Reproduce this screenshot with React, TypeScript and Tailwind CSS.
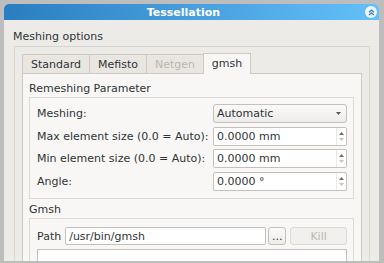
import React from "react";

function SpinBox({ value }: { value: string }) {
  return (
    <div className="flex h-[19px] w-[134px] items-stretch rounded-[2px] border border-[#c4c0bb] bg-white">
      <div className="flex flex-1 items-center pl-[3px]">{value}</div>
      <div className="flex w-[10px] flex-col items-center justify-center gap-[3px] border-l border-[#ebe9e6]">
        <svg width="5" height="3" viewBox="0 0 5 3">
          <path d="M0 3 L2.5 0 L5 3Z" fill="#6b6b6b" />
        </svg>
        <svg width="5" height="3" viewBox="0 0 5 3">
          <path d="M0 0 L2.5 3 L5 0Z" fill="#c4c4c4" />
        </svg>
      </div>
    </div>
  );
}

function Row({ label, children, className = "" }: { label: string; children: React.ReactNode; className?: string }) {
  return (
    <div className={`flex h-[19px] items-center justify-between ${className}`}>
      <span>{label}</span>
      {children}
    </div>
  );
}

export default function App() {
  return (
    <div className="h-[263px] w-[384px] overflow-hidden bg-[#bdbdbd] pl-[4px] pt-[4px] font-['DejaVu_Sans',sans-serif] text-[11px] leading-[13px] text-[#2e3436]">
      <div className="flex h-[257px] w-[375px] flex-col overflow-hidden rounded-t-[5px] bg-[#edebe8]">
        {/* Title bar */}
        <div className="relative flex h-[16px] shrink-0 items-center justify-center bg-gradient-to-r from-[#2a7ec0] to-[#63c0f9] pr-[16px]">
          <span className="font-bold text-white">Tessellation</span>
          <div className="absolute right-[2px] top-[2px] flex h-[12px] w-[12px] items-center justify-center rounded-full bg-[#eef5fb]">
            <svg width="7" height="7" viewBox="0 0 7 7" fill="none">
              <path d="M1 3.2 L3.5 1 L6 3.2" stroke="#3a7fb8" strokeWidth="1.3" />
              <path d="M1 6 L3.5 3.8 L6 6" stroke="#3a7fb8" strokeWidth="1.3" />
            </svg>
          </div>
        </div>

        {/* Meshing options */}
        <div className="pl-[9px] pt-[10px]">Meshing options</div>
        <div className="ml-[10px] mr-[9px] mt-[3px] flex flex-1 flex-col border border-b-0 border-[#d8d4cf] px-[7px] pt-[6px]">
          {/* Tabs */}
          <div className="flex items-end">
            <div className="flex h-[19px] w-[67px] items-center justify-center border-l border-t border-[#cdc9c4] bg-[#e9e6e2]">
              Standard
            </div>
            <div className="flex h-[19px] w-[57px] items-center justify-center border-l border-t border-[#cdc9c4] bg-[#e9e6e2]">
              Mefisto
            </div>
            <div className="flex h-[19px] w-[57px] items-center justify-center border-l border-t border-[#cdc9c4] bg-[#e9e6e2] text-[#bab7b3]">
              Netgen
            </div>
            <div className="relative z-10 -mb-px flex h-[21px] w-[48px] items-center justify-center border-x border-t border-[#cdc9c4] bg-[#f9f7f5] pb-[1px]">
              gmsh
            </div>
          </div>

          {/* Pane */}
          <div className="flex flex-1 flex-col border border-b-0 border-[#cdc9c4] bg-[#f9f7f5] pl-[6px] pr-[7px] pt-[8px]">
            <div>Remeshing Parameter</div>
            <div className="mt-[2px] flex flex-col border border-[#dedad5] pb-[7px] pl-[7px] pr-[6px] pt-[6px]">
              <Row label="Meshing:">
                <div className="flex h-[19px] w-[134px] items-center justify-between rounded-[3px] border border-[#c4c0bb] bg-gradient-to-b from-[#fafaf9] to-[#eeecea] pl-[3px] pr-[5px]">
                  <span>Automatic</span>
                  <svg width="5" height="3" viewBox="0 0 5 3">
                    <path d="M0 0 L2.5 3 L5 0Z" fill="#555753" />
                  </svg>
                </div>
              </Row>
              <Row label="Max element size (0.0 = Auto):" className="mt-[4px]">
                <SpinBox value="0.0000 mm" />
              </Row>
              <Row label="Min element size (0.0 = Auto):" className="mt-[3px]">
                <SpinBox value="0.0000 mm" />
              </Row>
              <Row label="Angle:" className="mt-[4px]">
                <SpinBox value="0.0000 °" />
              </Row>
            </div>

            <div className="mt-[4px]">Gmsh</div>
            <div className="mt-[2px] flex flex-1 flex-col border border-b-0 border-[#dedad5] pl-[7px] pr-[6px] pt-[8px]">
              <div className="flex h-[18px] items-stretch">
                <span className="flex items-center pr-[4px]">Path</span>
                <div className="flex w-[201px] items-center rounded-[2px] border border-[#c4c0bb] bg-white pl-[3px]">
                  /usr/bin/gmsh
                </div>
                <div className="ml-[2px] flex w-[18px] items-center justify-center rounded-[3px] border border-[#c4c0bb] bg-gradient-to-b from-[#fafaf9] to-[#eeecea]">
                  ...
                </div>
                <div className="ml-[4px] flex flex-1 items-center justify-center rounded-[3px] border border-[#dcd8d3] bg-[#f2f0ee] text-[#bab7b3]">
                  Kill
                </div>
              </div>
              <div className="mt-[4px] flex-1 border border-b-0 border-[#c4c0bb] bg-white" />
            </div>
          </div>
        </div>
      </div>
    </div>
  );
}
